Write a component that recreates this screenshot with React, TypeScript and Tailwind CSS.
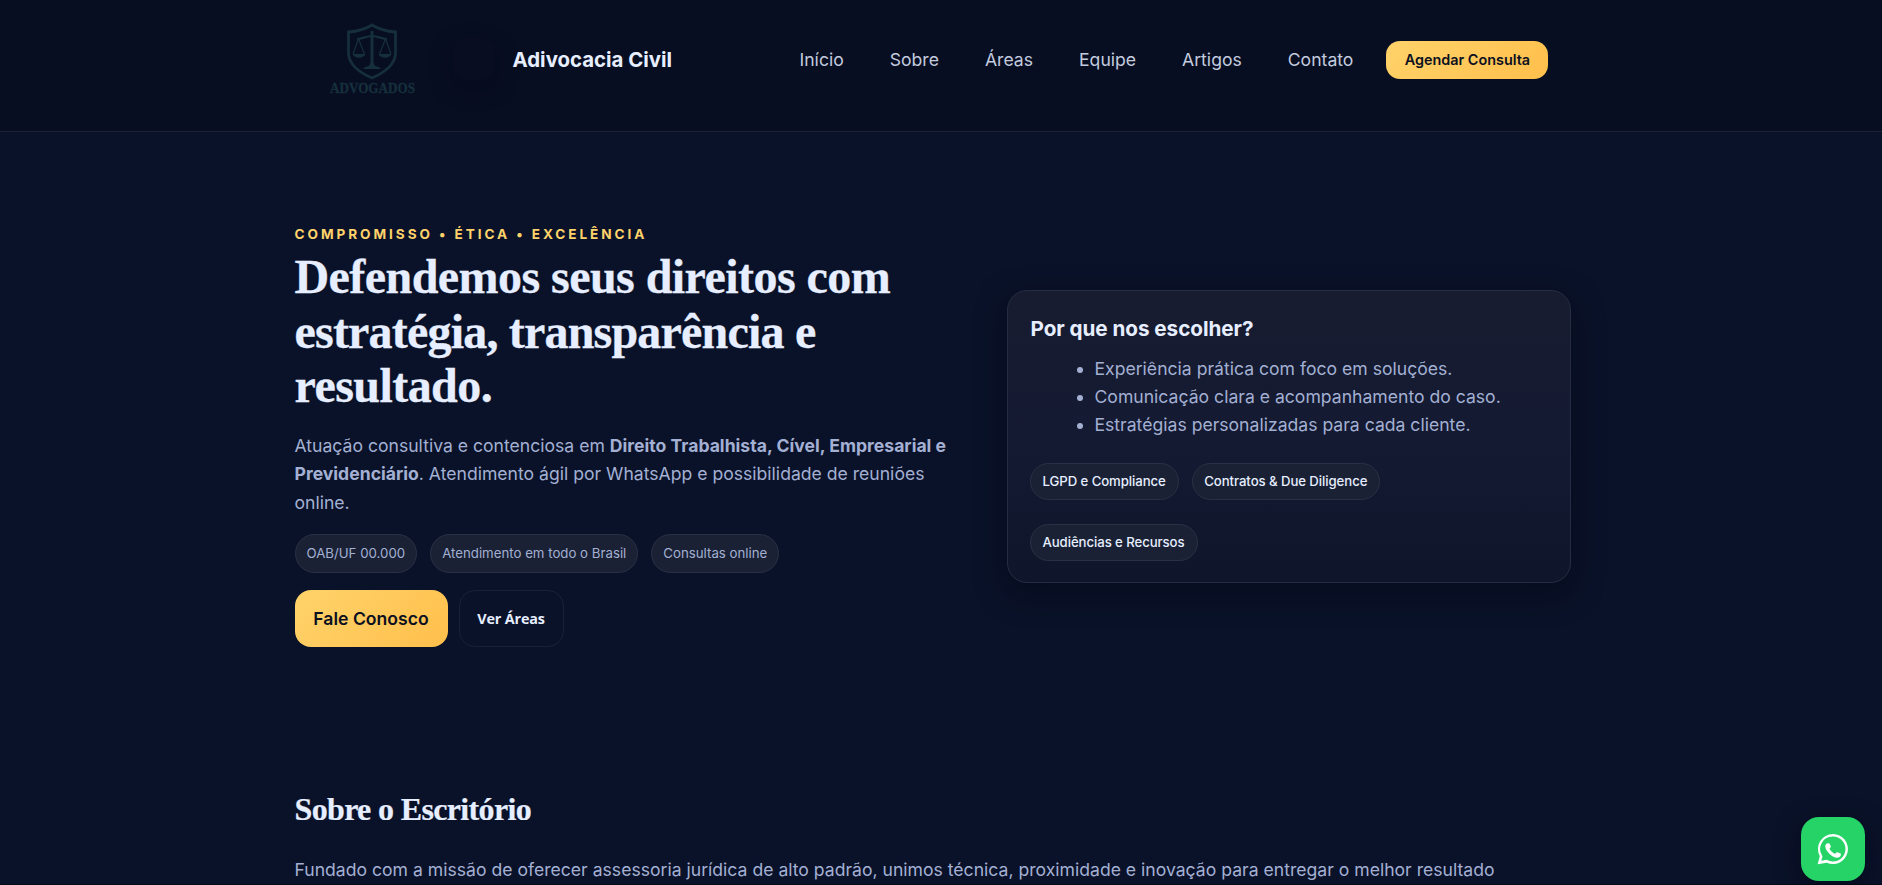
import React from "react";

const nav: { label: string; cls: string }[] = [
  { label: "Início", cls: "ml-0" },
  { label: "Sobre", cls: "ml-[46px]" },
  { label: "Áreas", cls: "ml-[46px]" },
  { label: "Equipe", cls: "ml-[46px]" },
  { label: "Artigos", cls: "ml-[46px]" },
  { label: "Contato", cls: "ml-[46px]" },
];

function Logo() {
  return (
    <svg width="90" height="82" viewBox="0 0 90 82" className="-mb-2 overflow-visible text-[#162f3c]" fill="none" stroke="currentColor">
      <path d="M44 2 C37.500 6 30.500 8.300 20.500 9 V31 C21.500 43 32.500 50 44 55 C55.500 50 66.500 43 67.500 31 V9 C57.500 8.300 50.500 6 44 2Z" strokeWidth="2.800" />
      <path d="M44 8v38" strokeWidth="3" />
      <path d="M29 16 C34.500 16 37.500 13 44 13 C50.500 13 53.500 16 59 16" strokeWidth="2.200" />
      <path d="M30.500 16 L25 31 M30.500 16 L36.500 31 M57.500 16 L51.500 31 M57.500 16 L63 31" strokeWidth="1.200" />
      <path d="M24.500 31h13c-1.500 5-11.500 5-13 0Z M50.500 31h13c-1.500 5-11.500 5-13 0Z M35.500 46c0-3 6-1 7-6h3c1 5 7 3 7 6Z" fill="currentColor" stroke="none" />
      <text x="2" y="69.500" fill="currentColor" stroke="currentColor" strokeWidth="0.300" fontFamily="Liberation Serif, serif" fontWeight="700" fontSize="15" textLength="85" lengthAdjust="spacingAndGlyphs">ADVOGADOS</text>
    </svg>
  );
}

function WhatsAppIcon() {
  return (
    <svg width="32" height="32" viewBox="0 0 32 32" fill="#fff">
      <path d="M16 1A15 15 0 0 0 2.800 23.200L.6 31.200l9.200-1.500A15 15 0 1 0 16 1Zm0 2.500a12.500 12.500 0 1 1-5.800 23.600l-.5-.3-5.500.9 1.300-4.300-.3-.6A12.500 12.500 0 0 1 16 3.500Z" />
      <path d="M10 10.500c-1.400.6-1.900 2-1.600 3.700.5 2.300 2 4.600 4.200 6.700 2.400 2.300 5 3.800 7.600 3.800 1.800 0 3.200-1.100 3.600-2.500.2-.9.100-1.500-.2-1.700-.6-.4-3-1.300-3.700-1.200-.6.100-1.300 1.500-1.900 1.500-.8 0-2.300-1-3.500-2.200-1.200-1.200-2-2.500-1.900-3 .1-.5 1.200-1.100 1.200-1.800 0-.6-.9-2.800-1.400-3.300-.5-.4-1.500-.4-2.400 0Z" />
    </svg>
  );
}

const gold = "bg-linear-135 from-[#ffd36a] to-[#ffbf4b] text-[#0b1020]";
const pill = "flex items-center rounded-[20px] border border-[#2a3145] bg-[#1a2135]";

export default function App() {
  return (
    <div className="flex h-[885px] w-full flex-col overflow-hidden border-b border-[#050a1a] bg-[#0a1229] font-['Inter',sans-serif] text-[#e6eeff]">
      <header className="flex h-[132px] shrink-0 justify-center border-b border-[#1b2136] bg-[#080e22]">
        <div className="mr-[17px] flex h-[120px] w-[1276px] items-center pl-[33px]">
          <Logo />
          <div className="mt-[-2px] ml-[35px] h-[42px] w-[42px] rounded-[14px] bg-[#080d22] shadow-[0_8px_20px_rgba(4,8,26,.5)]" />
          <div className="ml-[18px] w-[287px] text-[20.400px] font-bold">Adivocacia Civil</div>
          <nav className="flex text-[17.600px] font-normal text-[#c3cbdf]">
            {nav.map((n) => (
              <a key={n.label} className={n.cls}>{n.label}</a>
            ))}
          </nav>
          <button className={`ml-[33px] h-[38px] w-[162px] rounded-[14px] text-[14.400px] font-semibold whitespace-nowrap ${gold}`}>Agendar Consulta</button>
        </div>
      </header>
      <main className="mx-auto flex w-[1293px] grow flex-col pr-[17px]">
        <section className="flex justify-between pt-[94px]">
          <div className="w-[672px]">
            <p className="text-[13.600px] leading-[17px] font-bold tracking-[2.930px] text-[#ffd36a]">COMPROMISSO • ÉTICA • EXCELÊNCIA</p>
            <h1 className="mt-[7px] font-['Liberation_Serif',serif] text-[48px] leading-[54.600px] font-bold tracking-[-0.550px] whitespace-nowrap [-webkit-text-stroke:0.3px]">
              Defendemos seus direitos com<br /><span className="tracking-[-0.800px]">estratégia, transparência e</span><br />resultado.
            </h1>
            <p className="mt-[18px] text-[17.600px] leading-[28.500px] whitespace-nowrap text-[#a3b0d3]">
              Atuação consultiva e contenciosa em <b>Direito Trabalhista, Cível, Empresarial e<br />Previdenciário</b>. Atendimento ágil por WhatsApp e possibilidade de reuniões<br />online.
            </p>
            <div className="mt-[17px] flex gap-[13px] text-[13.250px] text-[#a3b0d3]">
              <span className={`h-[39px] px-[11px] ${pill}`}>OAB/UF 00.000</span>
              <span className={`h-[39px] px-[11px] ${pill}`}>Atendimento em todo o Brasil</span>
              <span className={`h-[39px] px-[11px] ${pill}`}>Consultas online</span>
            </div>
            <div className="mt-[17px] flex gap-[11px]">
              <button className={`h-[57px] w-[153px] rounded-[16px] text-[17.600px] font-semibold ${gold}`}>Fale Conosco</button>
              <button className="h-[57px] w-[105px] rounded-[16px] border border-[#1a2136] font-['Open_Sans',sans-serif] text-[14.400px] font-bold tracking-[-0.150px]">Ver Áreas</button>
            </div>
          </div>
          <aside className="mt-[64px] h-[293px] w-[564px] rounded-[20px] border border-[#262d42] bg-linear-to-b from-[#171c30] via-[#141a32] to-[#0f162b] pr-[22px] pl-[23px] shadow-[0_10px_30px_rgba(2,6,18,.5)]">
            <h3 className="mt-[24px] text-[20.700px] leading-[28px] font-bold tracking-[-0.050px]">Por que nos escolher?</h3>
            <ul className="mt-[12px] list-disc pl-[64px] text-[17.600px] leading-[28px] text-[#a3b0d3]">
              <li>Experiência prática com foco em soluções.</li>
              <li>Comunicação clara e acompanhamento do caso.</li>
              <li>Estratégias personalizadas para cada cliente.</li>
            </ul>
            <div className="mt-[24px] -ml-px flex flex-wrap gap-x-[13px] gap-y-[24px] text-[13.200px] font-medium tracking-[-0.080px]">
              <span className={`h-[37px] px-[12px] ${pill}`}>LGPD e Compliance</span>
              <span className={`h-[37px] px-[11.500px] ${pill}`}>Contratos &amp; Due Diligence</span>
              <span className={`h-[37px] px-[12px] ${pill}`}>Audiências e Recursos</span>
            </div>
          </aside>
        </section>
        <section className="mt-[140px]">
          <h2 className="font-['Liberation_Serif',serif] text-[32px] leading-[44px] font-bold tracking-[-0.650px] [-webkit-text-stroke:0.2px]">Sobre o Escritório</h2>
          <p className="mt-[25px] text-[17.600px] leading-[28px] whitespace-nowrap text-[#a3b0d3]">Fundado com a missão de oferecer assessoria jurídica de alto padrão, unimos técnica, proximidade e inovação para entregar o melhor resultado</p>
        </section>
      </main>
      <a className="fixed right-[17px] bottom-[4px] flex h-16 w-16 items-center justify-center rounded-[18px] bg-[#25d366] shadow-[0_8px_24px_rgba(2,6,18,.5)]">
        <WhatsAppIcon />
      </a>
    </div>
  );
}
